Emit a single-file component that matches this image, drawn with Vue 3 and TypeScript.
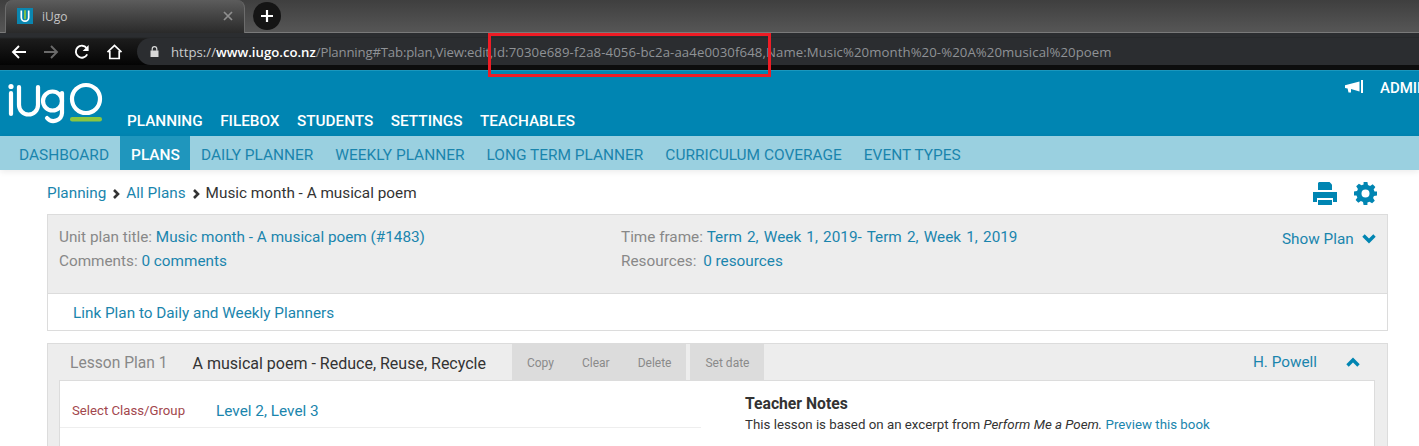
<script setup lang="ts">
const mainNav: string[] = ['PLANNING', 'FILEBOX', 'STUDENTS', 'SETTINGS', 'TEACHABLES']
const subNav: string[] = ['DASHBOARD', 'PLANS', 'DAILY PLANNER', 'WEEKLY PLANNER', 'LONG TERM PLANNER', 'CURRICULUM COVERAGE', 'EVENT TYPES']
</script>

<template>
  <div class="page">
    <div class="tabstrip">
      <div class="tab">
        <svg class="favicon" width="16" height="16" viewBox="0 0 16 16">
          <rect width="16" height="16" fill="#0a86b0" />
          <path d="M4.300 2.500v7a3.700 3.700 0 0 0 7.400 0v-7" fill="none" stroke="#fff" stroke-width="1.700" />
          <path d="M8 3v7.500" stroke="#8cc63f" stroke-width="1.800" stroke-linecap="round" />
        </svg>
        <span class="tabtitle">iUgo</span>
        <svg class="tabclose" width="10" height="10" viewBox="0 0 10 10">
          <path d="M1 1l8 8M9 1l-8 8" stroke="#8f8f8f" stroke-width="1.700" />
        </svg>
      </div>
      <div class="newtab">
        <svg width="14" height="14" viewBox="0 0 14 14"><path d="M7 1v12M1 7h12" stroke="#fff" stroke-width="2.200" /></svg>
      </div>
    </div>

    <div class="toolbar">
      <div class="navbtns">
        <svg width="16" height="16" viewBox="0 0 16 16"><path d="M15 8H2M8 2L2 8l6 6" fill="none" stroke="#fff" stroke-width="1.900" /></svg>
        <svg width="16" height="16" viewBox="0 0 16 16"><path d="M1 8h13M8 2l6 6-6 6" fill="none" stroke="#6a6a6a" stroke-width="1.900" /></svg>
        <svg width="16" height="16" viewBox="0 0 16 16"><path d="M13.200 10.400A6 6 0 1 1 12.600 4" fill="none" stroke="#fff" stroke-width="1.900" /><path d="M14.600 1v6h-6z" fill="#fff" /></svg>
        <svg width="17" height="16" viewBox="0 0 17 16"><path d="M1.500 8.200L8.500 1.500l7 6.700M3.800 7v7.500h9.400V7" fill="none" stroke="#fff" stroke-width="1.700" /></svg>
      </div>
      <div class="omnibox">
        <svg class="lock" width="9" height="11" viewBox="0 0 9 11"><path d="M0.500 4.500h8V11h-8z" fill="#d8d8d8" /><path d="M2.200 4.800V3a2.300 2.300 0 0 1 4.600 0v1.800" fill="none" stroke="#d8d8d8" stroke-width="1.200" /></svg>
        <span class="url"><span class="urlscheme">https://</span><span class="urlhost">www.iugo.co.nz</span><span class="urlpath">/Planning#Tab:plan,View:edit,</span><span class="urlid">Id:7030e689-f2a8-4056-bc2a-aa4e0030f648,</span><span class="urlname">Name:Music%20month%20-%20A%20musical%20poem</span></span>
      </div>
    </div>
    <div class="blackline"></div>

    <header class="header">
      <svg class="logo" width="100" height="50" viewBox="0 0 100 50">
        <g fill="none" stroke="#fff" stroke-width="4.200" stroke-linecap="round">
          <path d="M4 11v21" />
          <path d="M12 5v18a9.500 9.500 0 0 0 19 0V5" />
          <path d="M55 11v20a8.500 8.500 0 0 1-15 5" />
          <circle cx="45.500" cy="19" r="9.500" />
          <circle cx="79" cy="17" r="14" />
        </g>
        <circle cx="4" cy="4.500" r="2.600" fill="#fff" />
        <rect x="63" y="35" width="32" height="4.500" rx="2.200" fill="#8cc63f" />
      </svg>
      <nav class="mainnav">
        <a v-for="item in mainNav" :key="item" class="mainlink">{{ item }}</a>
      </nav>
      <div class="headright">
        <svg width="18" height="14" viewBox="0 0 18 14"><path d="M16 0h2v13h-2zM14.500 1.500v10L6 9v3.500H3.500L2.600 8.500 0 8V5.200z" fill="#fff" /></svg>
        <span class="admin">ADMIN</span>
      </div>
    </header>

    <nav class="subnav">
      <a v-for="item in subNav" :key="item" class="sublink" :class="{ active: item === 'PLANS' }">{{ item }}</a>
    </nav>

    <main class="content">
      <div class="crumbrow">
        <div class="crumbs">
          <a class="lnk">Planning</a>
          <svg class="sep" width="8" height="10" viewBox="0 0 8 10"><path d="M2 1l4 4-4 4" fill="none" stroke="#333" stroke-width="2.600" /></svg>
          <a class="lnk">All Plans</a>
          <svg class="sep" width="8" height="10" viewBox="0 0 8 10"><path d="M2 1l4 4-4 4" fill="none" stroke="#333" stroke-width="2.600" /></svg>
          <span>Music month - A musical poem</span>
        </div>
        <div class="tools">
          <svg width="24" height="23" viewBox="0 0 24 23" fill="#0085b2">
            <path d="M6 0h10.500L19 2.500V8H5V1z" />
            <path d="M0 10h24v10h-4v-4H4v4H0z" />
            <path d="M5 18h14v5H5z" />
            <path d="M4 16h16v1.400H4z" fill="#fff" />
          </svg>
          <svg width="23" height="23" viewBox="0 0 24 24" fill="#0085b2">
            <path fill-rule="evenodd" d="M10 0h4l.6 3.200 2.200.9 2.700-1.800 2.800 2.800-1.800 2.700.9 2.200L24 10v4l-3.200.6-.9 2.200 1.800 2.700-2.800 2.800-2.700-1.800-2.200.9L14 24h-4l-.6-3.200-2.200-.9-2.700 1.800-2.800-2.800 1.800-2.700-.9-2.200L0 14v-4l3.200-.6.9-2.200-1.800-2.700 2.800-2.800 2.700 1.800 2.200-.9zM12 7.800a4.200 4.200 0 1 0 0 8.400 4.200 4.200 0 0 0 0-8.400z" />
          </svg>
        </div>
      </div>

      <section class="planbox">
        <div class="plansummary">
          <div class="col colleft">
            <div>Unit plan title: <a class="lnk">Music month - A musical poem (#1483)</a></div>
            <div>Comments: <a class="lnk">0 comments</a></div>
          </div>
          <div class="col colmid">
            <div>Time frame: <a class="lnk timeframe">Term 2, Week 1, 2019- Term 2, Week 1, 2019</a></div>
            <div><span class="reslabel">Resources:</span> <a class="lnk">0 resources</a></div>
          </div>
          <a class="showplan lnk">Show Plan
            <svg width="14" height="10" viewBox="0 0 14 10"><path d="M1.500 1.500l5.500 5.500 5.500-5.500" fill="none" stroke="#0085b2" stroke-width="3.400" /></svg>
          </a>
        </div>
        <div class="planlink"><a class="lnk">Link Plan to Daily and Weekly Planners</a></div>
      </section>

      <section class="lesson">
        <div class="lessonhead">
          <span class="lessonno">Lesson Plan 1</span>
          <span class="lessontitle">A musical poem - Reduce, Reuse, Recycle</span>
          <div class="btngroup"><span>Copy</span><span>Clear</span><span>Delete</span></div>
          <div class="btngroup single"><span>Set date</span></div>
          <a class="author lnk">H. Powell</a>
          <svg class="collapse" width="14" height="10" viewBox="0 0 14 10"><path d="M1.500 8.500L7 3l5.500 5.500" fill="none" stroke="#0085b2" stroke-width="3.400" /></svg>
        </div>
        <div class="lessonbody">
          <div class="bodyleft">
            <div class="classrow">
              <span class="classlabel">Select Class/Group</span>
              <a class="lnk classval">Level 2, Level 3</a>
            </div>
            <div class="intent">Learning T</div>
          </div>
          <div class="bodyright">
            <h4 class="notes">Teacher Notes</h4>
            <p class="notetext">This lesson is based on an excerpt from <em>Perform Me a Poem.</em> <a class="lnk">Preview this book</a></p>
          </div>
        </div>
      </section>
    </main>

    <div class="highlight"></div>
  </div>
</template>

<style>
html, body { margin: 0; overflow: hidden; }
</style>

<style scoped>
.page {
  position: relative;
  width: 1419px;
  height: 446px;
  overflow: hidden;
  background: #fff;
  font-family: Roboto, "Liberation Sans", sans-serif;
  font-size: 15.300px;
  color: #333;
}
.tabstrip {
  height: 33px;
  box-sizing: border-box;
  display: flex;
  align-items: flex-start;
  padding-left: 5px;
  background: linear-gradient(#3f3f3f, #565656);
  border-bottom: 1px solid #7a7a7a;
}
.tab {
  width: 240px;
  height: 33px;
  box-sizing: border-box;
  display: flex;
  align-items: center;
  padding: 0 11px 0 11px;
  background: linear-gradient(#5c5c5c, #2a2a2a);
  border: 1px solid #6c6c6c;
  border-top: 0;
  border-bottom: 0;
  border-top-right-radius: 8px;
  border-top-left-radius: 8px;
}
.favicon { flex: none; margin-top: -1px; }
.tabtitle {
  margin-left: 9px;
  flex: 1;
  font-family: "Open Sans", sans-serif;
  font-size: 12px;
  color: #c4c4c4;
  margin-top: -1px;
}
.tabclose { margin-top: -1px; }
.newtab {
  width: 28px;
  height: 28px;
  margin: 2px 0 0 8px;
  border-radius: 50%;
  background: #151515;
  display: flex;
  align-items: center;
  justify-content: center;
}
.toolbar {
  height: 32px;
  box-sizing: border-box;
  padding-top: 5px;
  display: flex;
  align-items: center;
  background: linear-gradient(#2b2d30, #2b2d30 4px, #1c1c1c 6px, #040404);
}
.navbtns {
  width: 137px;
  flex: none;
  box-sizing: border-box;
  padding: 0 14px 0 11px;
  display: flex;
  align-items: center;
  justify-content: space-between;
}
.omnibox {
  flex: 1;
  height: 27px;
  background: #2b2d30;
  border-radius: 14px 0 0 14px;
  display: flex;
  align-items: center;
  padding-left: 13px;
  overflow: hidden;
}
.lock { flex: none; }
.url {
  margin-left: 12px;
  font-family: "Open Sans", sans-serif;
  font-size: 13.200px;
  color: #8f9296;
  white-space: nowrap;
}
.urlscheme { color: #c9cbcd; }
.urlhost { color: #fff; font-weight: 600; }
.urlpath { letter-spacing: -0.170px; }
.urlid { letter-spacing: 0.100px; }
.urlname { letter-spacing: 0.080px; }
.blackline { height: 5px; background: #0d0d0d; }
.header {
  height: 66px;
  box-sizing: border-box;
  display: flex;
  background: #0085b2;
  border-top: 1px solid #1a97bd;
  position: relative;
}
.logo { flex: none; margin: 11px 0 0 7px; }
.mainnav {
  margin-left: 20px;
  display: flex;
  gap: 17.500px;
  align-items: flex-end;
  padding-bottom: 5px;
  height: 60px;
}
.mainlink { color: #fff; font-size: 15.300px; font-weight: 500; line-height: 20px; }
.headright {
  margin-left: auto;
  margin-right: -3px;
  display: flex;
  align-items: flex-start;
  gap: 17px;
  padding-top: 9px;
  flex: none;
}
.admin { color: #fff; font-size: 15px; font-weight: 500; line-height: 17px; width: 42px; white-space: nowrap; overflow: hidden; }
.subnav {
  height: 34px;
  display: flex;
  background: #9ad0e0;
  padding-left: 8px;
  box-shadow: 0 2px 6px rgba(0, 0, 0, 0.08);
  position: relative;
}
.sublink {
  padding: 0 11px;
  line-height: 38px;
  color: #1a85ad;
  font-size: 15.450px;
  white-space: nowrap;
}
.sublink.active {
  background: #1f96bd;
  color: #fff;
  font-weight: 500;
  padding: 0 10px 0 11px;
}
.content { padding: 0 31px 0 47px; }
.lnk { color: #1a85ad; }
.crumbrow {
  height: 44px;
  display: flex;
  justify-content: space-between;
  align-items: flex-start;
}
.crumbs {
  display: flex;
  align-items: center;
  height: 46px;
  gap: 6px;
}
.sep { flex: none; margin-top: 1px; }
.tools {
  display: flex;
  gap: 17px;
  margin: 12px 11px 0 0;
}
.planbox { border: 1px solid #dcdcdc; }
.plansummary {
  height: 68px;
  background: #ededed;
  border-bottom: 1px solid #dcdcdc;
  display: flex;
  padding: 10px 0 0 11px;
  color: #888;
  line-height: 24px;
}
.col { flex: none; }
.colleft { width: 562px; }
.colmid { width: 661px; }
.timeframe { word-spacing: 1.400px; }
.reslabel { margin-right: 3px; }
.showplan {
  display: flex;
  align-items: center;
  gap: 8px;
  height: 28px;
  white-space: nowrap;
}
.planlink { height: 36px; box-sizing: border-box; padding-top: 2px; display: flex; align-items: center; padding-left: 25px; }
.lesson {
  margin-top: 12px;
  border: 1px solid #dcdcdc;
  background: #ededed;
  padding: 0 12px 0 11px;
  height: 200px;
}
.lessonhead {
  height: 36px;
  display: flex;
  align-items: center;
}
.lessonno { margin: 2px 0 0 11px; color: #888; font-size: 15.600px; }
.lessontitle { margin: 2px 0 0 25px; color: #333; font-size: 16px; }
.btngroup {
  display: flex;
  height: 36px;
  box-sizing: border-box;
  align-items: center;
  background: #dcdcdc;
  color: #8a8a8a;
  font-size: 12px;
  margin-left: 26px;
  padding: 2px 15px 0;
  gap: 28px;
}
.btngroup.single { margin-left: 4px; }
.author { margin-left: auto; }
.collapse { margin: 0 15px 0 29px; }
.lessonbody {
  background: #fff;
  border-top: 1px solid #dcdcdc;
  border-left: 1px solid #dcdcdc;
  border-right: 1px solid #dcdcdc;
  display: flex;
  height: 160px;
}
.bodyleft { width: 641px; flex: none; }
.classrow {
  height: 47px;
  box-sizing: border-box;
  display: flex;
  align-items: center;
  padding: 13px 0 0 12px;
  border-bottom: 1px solid #eee;
}
.classlabel { width: 144px; color: #a2474d; font-size: 13.200px; }
.classval { font-size: 15.350px; }
.intent { padding: 16px 0 0 12px; font-weight: 700; font-size: 15.700px; word-spacing: 3px; color: #333; line-height: 20px; }
.bodyright { padding: 13px 0 0 44px; }
.notes { margin: 0; font-size: 15.700px; font-weight: 700; line-height: 20px; }
.notetext { margin: 2px 0 0; font-size: 13.300px; line-height: 18px; }
.highlight {
  position: absolute;
  left: 488px;
  top: 33px;
  width: 283px;
  height: 44px;
  box-sizing: border-box;
  border: 3px solid #ee1c25;
}
</style>
